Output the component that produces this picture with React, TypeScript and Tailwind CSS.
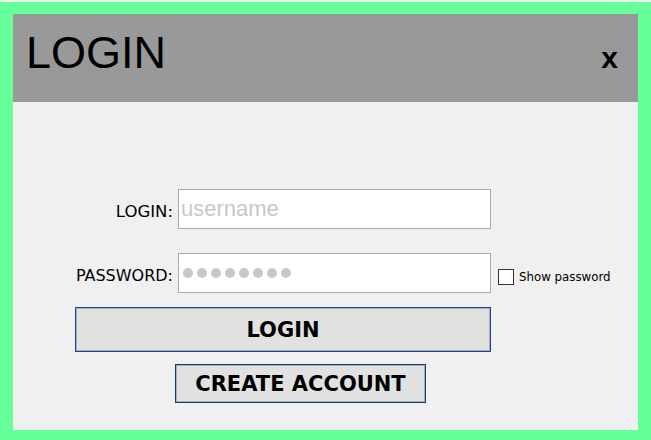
import React from "react";

export default function App() {
  return (
    <div className="w-[651px] h-[440px] bg-[#66ff99] border-t-2 border-[#eef2ee] pt-[12px] pl-[13px] pr-[13px] pb-[10px] flex flex-col overflow-hidden">
      <div className="h-[88px] shrink-0 bg-[#999999] flex items-start justify-between">
        <div
          className="mt-[16px] ml-[13px] text-[45px] leading-none text-black"
          style={{ fontFamily: '"Liberation Sans", Arial, sans-serif' }}
        >
          LOGIN
        </div>
        <div
          className="mt-[29px] mr-[20px] text-[30px] leading-none font-bold text-black"
          style={{ fontFamily: '"Liberation Sans", Arial, sans-serif' }}
        >
          x
        </div>
      </div>
      <div
        className="flex-1 bg-[#f0f0f0] pl-[62px] pt-[87px] flex flex-col"
        style={{ fontFamily: '"DejaVu Sans", Verdana, sans-serif' }}
      >
        <div className="flex items-start gap-[5px]">
          <div className="w-[98px] text-right text-[16.5px] leading-[16px] pt-[15px] text-black">LOGIN:</div>
          <input
            className="w-[313px] h-[40px] border border-[#ababab] bg-white px-[2px] text-[22px] outline-none placeholder:text-[#c8c8c8]"
            style={{ fontFamily: '"Liberation Sans", Arial, sans-serif' }}
            placeholder="username"
          />
        </div>
        <div className="flex items-start gap-[5px] mt-[24px]">
          <div className="w-[98px] text-right text-[16px] leading-[16px] pt-[15px] text-black">PASSWORD:</div>
          <div className="w-[313px] h-[40px] border border-[#ababab] bg-white pl-[4px] flex items-center gap-[4px]">
            {Array.from({ length: 8 }).map((_, i) => (
              <span key={i} className="w-[10px] h-[10px] rounded-full bg-[#c8c8c8]" />
            ))}
          </div>
          <div className="flex items-center ml-[2px] mt-[16px]">
            <span className="w-[16px] h-[16px] border border-[#333333] bg-white" />
            <span className="ml-[5px] text-[11.8px] leading-[14px] text-black">Show password</span>
          </div>
        </div>
        <button className="mt-[14px] w-[416px] h-[45px] pt-[3px] border border-[#1a44a0] bg-[#e1e1e1] shadow-[inset_0_0_0_1px_#adadad] flex items-center justify-center text-[21px] font-bold text-black">
          LOGIN
        </button>
        <button className="mt-[12px] ml-[100px] w-[251px] h-[39px] pt-[3px] border border-[#143a6e] bg-[#e1e1e1] shadow-[inset_0_0_0_1px_#adadad] flex items-center justify-center text-[21px] font-bold text-black">
          CREATE ACCOUNT
        </button>
      </div>
    </div>
  );
}
